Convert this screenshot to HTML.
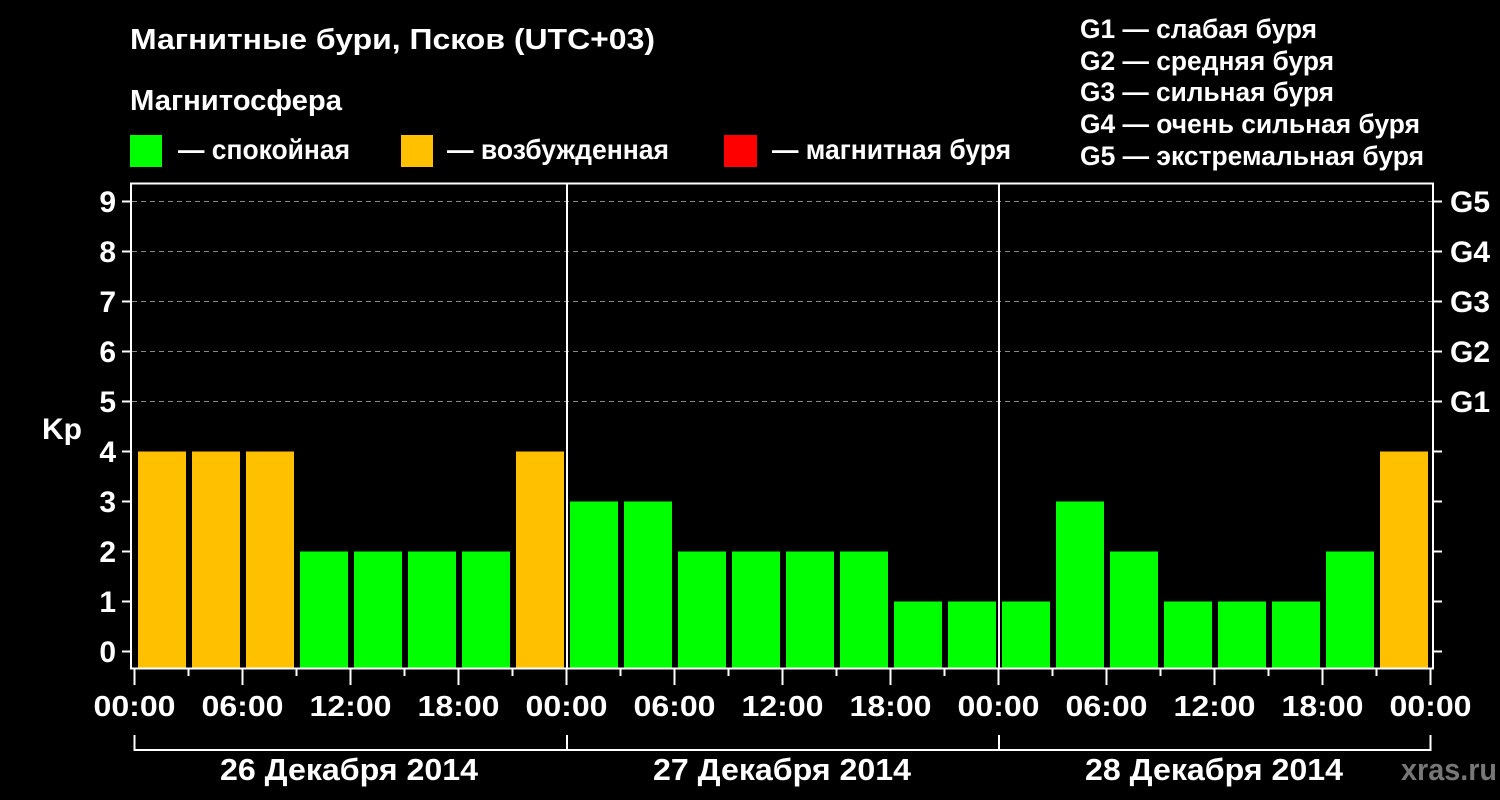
<!DOCTYPE html>
<html><head><meta charset="utf-8"><style>
html,body{margin:0;padding:0;background:#000;}
svg{display:block;}
text{font-family:"Liberation Sans",Arial,sans-serif;font-weight:bold;fill:#fff;}
</style></head><body>
<svg width="1500" height="800" viewBox="0 0 1500 800" xmlns="http://www.w3.org/2000/svg">
<rect width="1500" height="800" fill="#000"/>
<text x="130" y="49" font-size="29" textLength="525" lengthAdjust="spacingAndGlyphs">Магнитные бури, Псков (UTC+03)</text>
<text x="130" y="110" font-size="29" textLength="212" lengthAdjust="spacingAndGlyphs">Магнитосфера</text>
<rect x="130" y="135" width="32" height="32" fill="#00ff00"/>
<text x="178" y="159" font-size="28" textLength="172" lengthAdjust="spacingAndGlyphs">— спокойная</text>
<rect x="401" y="135" width="32" height="32" fill="#ffc000"/>
<text x="447" y="159" font-size="28" textLength="222" lengthAdjust="spacingAndGlyphs">— возбужденная</text>
<rect x="724" y="135" width="33" height="32" fill="#ff0000"/>
<text x="772" y="159" font-size="28" textLength="239" lengthAdjust="spacingAndGlyphs">— магнитная буря</text>
<g font-size="27">
<text x="1080" y="38" textLength="237" lengthAdjust="spacingAndGlyphs">G1 — слабая буря</text>
<text x="1080" y="70" textLength="254" lengthAdjust="spacingAndGlyphs">G2 — средняя буря</text>
<text x="1080" y="101" textLength="254" lengthAdjust="spacingAndGlyphs">G3 — сильная буря</text>
<text x="1080" y="133" textLength="340" lengthAdjust="spacingAndGlyphs">G4 — очень сильная буря</text>
<text x="1080" y="165" textLength="344" lengthAdjust="spacingAndGlyphs">G5 — экстремальная буря</text>
</g>
<g stroke="#888" stroke-width="1" stroke-dasharray="5,4">
<line x1="132" y1="201.5" x2="1432" y2="201.5"/>
<line x1="132" y1="251.5" x2="1432" y2="251.5"/>
<line x1="132" y1="301.5" x2="1432" y2="301.5"/>
<line x1="132" y1="351.5" x2="1432" y2="351.5"/>
<line x1="132" y1="401.5" x2="1432" y2="401.5"/>
</g>
<g id="bars"></g>
<g stroke="#fff" stroke-width="2" fill="none">
<rect x="131" y="183.5" width="1302" height="485"/>
<line x1="567" y1="183" x2="567" y2="668"/>
<line x1="999" y1="183" x2="999" y2="668"/>
</g>
<g font-size="30" text-anchor="end">
<text x="116" y="212">9</text><text x="116" y="262">8</text><text x="116" y="312">7</text><text x="116" y="362">6</text><text x="116" y="412">5</text><text x="116" y="462">4</text><text x="116" y="512">3</text><text x="116" y="562">2</text><text x="116" y="612">1</text><text x="116" y="662">0</text>
</g>
<g font-size="30">
<text x="1450" y="212">G5</text><text x="1450" y="262">G4</text><text x="1450" y="312">G3</text><text x="1450" y="362">G2</text><text x="1450" y="412">G1</text>
</g>
<text x="42" y="439" font-size="30">Kp</text>
<g stroke="#fff" stroke-width="2" id="ticks"></g>
<g font-size="29" text-anchor="middle" id="xl"></g>
<g stroke="#fff" stroke-width="2" fill="none">
<path d="M134.5 735V750H1430.5V735M567 735V750M999 735V750"/>
</g>
<g font-size="31" text-anchor="middle">
<text x="349" y="780" textLength="258" lengthAdjust="spacingAndGlyphs">26 Декабря 2014</text>
<text x="782" y="780" textLength="258" lengthAdjust="spacingAndGlyphs">27 Декабря 2014</text>
<text x="1214" y="780" textLength="258" lengthAdjust="spacingAndGlyphs">28 Декабря 2014</text>
</g>
<text x="1401" y="780" font-size="31" style="fill:#777" textLength="96" lengthAdjust="spacingAndGlyphs">xras.ru</text>
<script>
var v=[4,4,4,2,2,2,2,4,3,3,2,2,2,2,1,1,1,3,2,1,1,1,2,4];
var ns="http://www.w3.org/2000/svg",b=document.getElementById('bars'),t=document.getElementById('ticks'),xl=document.getElementById('xl');
v.forEach(function(k,i){var r=document.createElementNS(ns,'rect');var top=651.5-50*k;r.setAttribute('x',138+54*i);r.setAttribute('y',top);r.setAttribute('width',48);r.setAttribute('height',668-top);r.setAttribute('fill',k>=4?'#ffc000':'#00ff00');b.appendChild(r);});
for(var k=0;k<=9;k++){var y=651.5-50*k;var l=document.createElementNS(ns,'line');l.setAttribute('x1',122);l.setAttribute('x2',131);l.setAttribute('y1',y);l.setAttribute('y2',y);t.appendChild(l);var m=document.createElementNS(ns,'line');m.setAttribute('x1',1433);m.setAttribute('x2',1442);m.setAttribute('y1',y);m.setAttribute('y2',y);t.appendChild(m);}
var lab=['00:00','06:00','12:00','18:00'];
for(var i=0;i<=24;i++){var x=134.5+54*i;var l=document.createElementNS(ns,'line');l.setAttribute('x1',x);l.setAttribute('x2',x);l.setAttribute('y1',669);l.setAttribute('y2',i%2?676:685);t.appendChild(l);
if(i%2==0){var tx=document.createElementNS(ns,'text');tx.setAttribute('x',x);tx.setAttribute('y',716);tx.setAttribute('textLength',82);tx.setAttribute('lengthAdjust','spacingAndGlyphs');tx.textContent=lab[(i/2)%4];xl.appendChild(tx);}}
</script>
</svg>
</body></html>
